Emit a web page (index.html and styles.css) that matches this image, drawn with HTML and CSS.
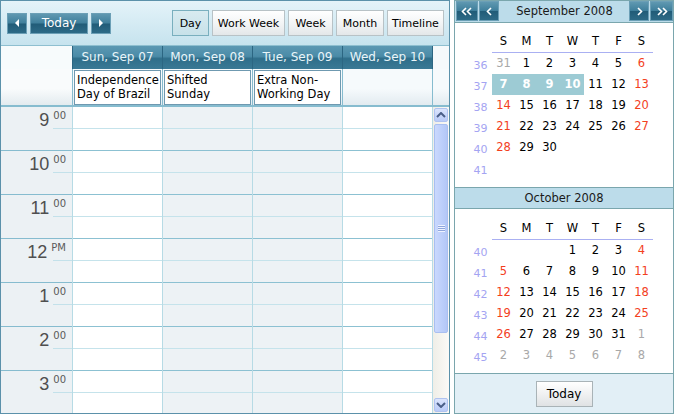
FILE: index.html
```html
<!DOCTYPE html>
<html>
<head>
<meta charset="utf-8">
<title>Scheduler</title>
<link rel="stylesheet" href="styles.css">
</head>
<body>
<div class="app">
  <div class="sched">
    <div class="toolbar">
      <div class="nav">
        <button class="nbtn arrow"><svg width="6" height="8" viewBox="0 0 6 8"><path d="M5 0 L1 4 L5 8 Z" fill="#fff"/></svg></button>
        <button class="nbtn today">Today</button>
        <button class="nbtn arrow"><svg width="6" height="8" viewBox="0 0 6 8"><path d="M1 0 L5 4 L1 8 Z" fill="#fff"/></svg></button>
      </div>
      <div class="views">
        <button class="vbtn sel w-day">Day</button>
        <button class="vbtn w-ww">Work Week</button>
        <button class="vbtn w-week">Week</button>
        <button class="vbtn w-month">Month</button>
        <button class="vbtn w-tl">Timeline</button>
      </div>
    </div>
    <div class="hdr">
      <div class="corner"></div>
      <div class="dh">Sun, Sep 07</div>
      <div class="dh">Mon, Sep 08</div>
      <div class="dh">Tue, Sep 09</div>
      <div class="dh">Wed, Sep 10</div>
      <div class="hscroll"></div>
    </div>
    <div class="allday">
      <div class="acorner"></div>
      <div class="ac"><div class="ev">Independence Day of Brazil</div></div>
      <div class="ac"><div class="ev">Shifted Sunday</div></div>
      <div class="ac"><div class="ev">Extra Non-Working Day</div></div>
      <div class="ac"></div>
      <div class="ascroll"></div>
    </div>
    <div class="body">
      <div class="times">
        <div class="hour"><div class="lbl"><span class="hh">9</span><span class="mm">00</span></div></div>
        <div class="hour"><div class="lbl"><span class="hh">10</span><span class="mm">00</span></div></div>
        <div class="hour"><div class="lbl"><span class="hh">11</span><span class="mm">00</span></div></div>
        <div class="hour"><div class="lbl"><span class="hh">12</span><span class="mm">PM</span></div></div>
        <div class="hour"><div class="lbl"><span class="hh">1</span><span class="mm">00</span></div></div>
        <div class="hour"><div class="lbl"><span class="hh">2</span><span class="mm">00</span></div></div>
        <div class="hour"><div class="lbl"><span class="hh">3</span><span class="mm">00</span></div></div>
      </div>
      <div class="col">
        <div class="s"></div><div class="s"></div><div class="s"></div><div class="s"></div><div class="s"></div><div class="s"></div><div class="s"></div><div class="s"></div><div class="s"></div><div class="s"></div><div class="s"></div><div class="s"></div><div class="s"></div><div class="s"></div>
      </div>
      <div class="col gray">
        <div class="s"></div><div class="s"></div><div class="s"></div><div class="s"></div><div class="s"></div><div class="s"></div><div class="s"></div><div class="s"></div><div class="s"></div><div class="s"></div><div class="s"></div><div class="s"></div><div class="s"></div><div class="s"></div>
      </div>
      <div class="col gray">
        <div class="s"></div><div class="s"></div><div class="s"></div><div class="s"></div><div class="s"></div><div class="s"></div><div class="s"></div><div class="s"></div><div class="s"></div><div class="s"></div><div class="s"></div><div class="s"></div><div class="s"></div><div class="s"></div>
      </div>
      <div class="col">
        <div class="s"></div><div class="s"></div><div class="s"></div><div class="s"></div><div class="s"></div><div class="s"></div><div class="s"></div><div class="s"></div><div class="s"></div><div class="s"></div><div class="s"></div><div class="s"></div><div class="s"></div><div class="s"></div>
      </div>
      <div class="vscroll">
        <div class="sbtn"><svg width="10" height="6" viewBox="0 0 10 6"><path d="M1 5 L5 1 L9 5" fill="none" stroke="#4a5f88" stroke-width="2"/></svg></div>
        <div class="thumb"><div class="grip"></div></div>
        <div class="sfill"></div>
        <div class="sbtn"><svg width="10" height="6" viewBox="0 0 10 6"><path d="M1 1 L5 5 L9 1" fill="none" stroke="#4a5f88" stroke-width="2"/></svg></div>
      </div>
    </div>
  </div>

  <div class="cal">
    <div class="cnav">
      <button class="cbtn wide"><svg width="12" height="9" viewBox="0 0 12 9"><path d="M5 1 L1.5 4.5 L5 8 M10 1 L6.5 4.5 L10 8" fill="none" stroke="#fff" stroke-width="1.6"/></svg></button>
      <button class="cbtn"><svg width="7" height="9" viewBox="0 0 7 9"><path d="M5 1 L1.5 4.5 L5 8" fill="none" stroke="#fff" stroke-width="1.6"/></svg></button>
      <div class="ctitle">September 2008</div>
      <button class="cbtn"><svg width="7" height="9" viewBox="0 0 7 9"><path d="M2 1 L5.5 4.5 L2 8" fill="none" stroke="#fff" stroke-width="1.6"/></svg></button>
      <button class="cbtn wide"><svg width="12" height="9" viewBox="0 0 12 9"><path d="M2 1 L5.5 4.5 L2 8 M7 1 L10.5 4.5 L7 8" fill="none" stroke="#fff" stroke-width="1.6"/></svg></button>
    </div>
    <div class="month m1">
      <div class="mgrid">
        <span></span><span class="dn">S</span><span class="dn">M</span><span class="dn">T</span><span class="dn">W</span><span class="dn">T</span><span class="dn">F</span><span class="dn">S</span>
        <span class="wk">36</span><span class="o">31</span><span>1</span><span>2</span><span>3</span><span>4</span><span>5</span><span class="we">6</span>
        <span class="wk">37</span><span class="sl">7</span><span class="sl">8</span><span class="sl">9</span><span class="sl">10</span><span>11</span><span>12</span><span class="we">13</span>
        <span class="wk">38</span><span class="we">14</span><span>15</span><span>16</span><span>17</span><span>18</span><span>19</span><span class="we">20</span>
        <span class="wk">39</span><span class="we">21</span><span>22</span><span>23</span><span>24</span><span>25</span><span>26</span><span class="we">27</span>
        <span class="wk">40</span><span class="we">28</span><span>29</span><span>30</span><span></span><span></span><span></span><span></span>
        <span class="wk">41</span><span></span><span></span><span></span><span></span><span></span><span></span><span></span>
      </div>
    </div>
    <div class="mhead">October 2008</div>
    <div class="month m2">
      <div class="mgrid">
        <span></span><span class="dn">S</span><span class="dn">M</span><span class="dn">T</span><span class="dn">W</span><span class="dn">T</span><span class="dn">F</span><span class="dn">S</span>
        <span class="wk">40</span><span></span><span></span><span></span><span>1</span><span>2</span><span>3</span><span class="we">4</span>
        <span class="wk">41</span><span class="we">5</span><span>6</span><span>7</span><span>8</span><span>9</span><span>10</span><span class="we">11</span>
        <span class="wk">42</span><span class="we">12</span><span>13</span><span>14</span><span>15</span><span>16</span><span>17</span><span class="we">18</span>
        <span class="wk">43</span><span class="we">19</span><span>20</span><span>21</span><span>22</span><span>23</span><span>24</span><span class="we">25</span>
        <span class="wk">44</span><span class="we">26</span><span>27</span><span>28</span><span>29</span><span>30</span><span>31</span><span class="o">1</span>
        <span class="wk">45</span><span class="o">2</span><span class="o">3</span><span class="o">4</span><span class="o">5</span><span class="o">6</span><span class="o">7</span><span class="o">8</span>
      </div>
    </div>
    <div class="cfoot"><button class="tbtn">Today</button></div>
  </div>
</div>
</body>
</html>
```

FILE: styles.css
```css
* { box-sizing: border-box; }
html, body { margin: 0; padding: 0; background: #fff; }
body { font-family: "DejaVu Sans", Verdana, sans-serif; font-size: 11px; color: #000; }
button { font-family: inherit; font-size: 11px; margin: 0; padding: 0; cursor: default; }

.app { display: flex; width: 674px; height: 414px; gap: 4px; }

/* ---------- scheduler ---------- */
.sched {
  width: 450px; height: 414px;
  border: 1px solid #5b91aa;
  display: flex; flex-direction: column;
  overflow: hidden;
}
.toolbar {
  height: 45px; flex: none;
  display: flex; align-items: center;
  padding-left: 6px;
  background: linear-gradient(#e4f3f9, #c6e3ee);
  border-bottom: 1px solid #8ebfd0;
}
.nav { display: flex; gap: 3px; }
.nbtn {
  height: 21px;
  border: 1px solid #6b9fb6;
  background: linear-gradient(#5f98b1, #3f7f9b 48%, #215c78 52%, #2d6a86);
  color: #fff;
  display: flex; align-items: center; justify-content: center;
}
.nbtn.arrow { width: 20px; }
.nbtn.today { width: 58px; font-size: 12px; }
.views { display: flex; gap: 3px; margin-left: 61px; }
.vbtn {
  height: 26px;
  border: 1px solid #b8c2c6;
  background: linear-gradient(#ffffff, #f3f5f6 50%, #e3e7e9);
  color: #000;
}
.vbtn.sel { background: linear-gradient(#d8ebf0, #c7e1e9); border-color: #79afbe; }
.w-day { width: 37px; }
.w-ww { width: 73px; }
.w-week { width: 45px; }
.w-month { width: 48px; }
.w-tl { width: 57px; }

.hdr { height: 23px; flex: none; display: flex; }
.corner { width: 71px; background: #f7fbfc; }
.dh {
  width: 90px;
  border-left: 1px solid #2c6682;
  background: linear-gradient(#5b98b3, #4b8ba7 45%, #2f6e8a 55%, #3a7995);
  color: #eaf5f9;
  font-size: 12px;
  text-align: center;
  line-height: 23px;
}
.hscroll { width: 17px; border-left: 1px solid #2c6682; background: #f5f9fb; }

.allday {
  height: 38px; flex: none; display: flex;
  border-bottom: 2px solid #86bccf;
}
.acorner { width: 71px; background: linear-gradient(#f9fbfc 55%, #e3ebef); }
.ac {
  width: 90px;
  border-left: 1px solid #86bccf;
  background: linear-gradient(#f6fafc 55%, #e2ebf0);
  padding: 1px 1px 0 1px;
}
.ascroll { width: 17px; border-left: 1px solid #86bccf; background: linear-gradient(#f6fafc 55%, #e2ebf0); }
.ev {
  width: 87px; height: 35px;
  border: 1px solid #6f99b0;
  background: #fff;
  padding: 2px 0 0 2px;
  font-size: 11.5px;
  line-height: 14px;
  color: #000;
  overflow: hidden;
}

.body { flex: 1; display: flex; overflow: hidden; }
.times { width: 71px; background: #ecf1f4; flex: none; }
.hour { height: 44px; border-bottom: 1px solid #86bccf; }
.lbl {
  height: 22px;
  text-align: right;
  padding-right: 6px;
  padding-top: 4px;
  white-space: nowrap;
  background: linear-gradient(#c3e1ea, #c3e1ea) no-repeat right bottom / 19px 1px;
  color: #555;
}
.hh { font-family: "Liberation Sans", Arial, sans-serif; font-size: 18px; line-height: 18px; vertical-align: top; color: #4f4f4f; }
.mm { font-size: 10px; line-height: 10px; vertical-align: top; margin-left: 4px; color: #5a5a5a; }

.col { width: 90px; flex: none; border-left: 1px solid #b7dbe5; background: #fff; }
.col.gray { background: #edf2f5; }
.col:first-of-type { border-left-color: #86bccf; }
.s { height: 22px; border-bottom: 1px solid #c5e3eb; }
.s:nth-child(even) { border-bottom-color: #8cc1d2; }

.vscroll {
  width: 17px; flex: none;
  border-left: 1px solid #b7dbe5;
  background: linear-gradient(to right, #efeee7, #fbfaf7);
  padding: 1px;
  display: flex; flex-direction: column;
}
.sbtn {
  height: 14px; flex: none;
  border: 1px solid #b0c3f0;
  border-radius: 2px;
  background: linear-gradient(#dbe5fd, #b9cbf8);
  display: flex; align-items: center; justify-content: center;
}
.thumb {
  height: 209px; flex: none; margin-top: 2px;
  border: 1px solid #a9bff1;
  border-radius: 2px;
  background: linear-gradient(to right, #cad8fd, #bed0fb 50%, #b3c7f7);
  display: flex; align-items: center; justify-content: center;
}
.grip {
  width: 7px; height: 7px;
  background: repeating-linear-gradient(#eef3ff 0 1px, #8fa6dc 1px 2px);
}
.sfill { flex: 1; }

/* ---------- calendar ---------- */
.cal {
  width: 220px; height: 414px;
  border: 1px solid #7aa6ad;
  display: flex; flex-direction: column;
  font-size: 11.5px;
}
.cnav {
  height: 22px; flex: none;
  display: flex; align-items: stretch;
  padding: 0 0 1px 1px;
  background: #bcdcea;
  border-bottom: 1px solid #7aa6ad;
}
.cbtn {
  width: 20px;
  border: 1px solid #6b9fb6;
  background: linear-gradient(#5f98b1, #3f7f9b 48%, #215c78 52%, #2d6a86);
  display: flex; align-items: center; justify-content: center;
  margin-right: 1px;
}
.cbtn.wide { width: 22px; }
.cbtn:last-child { margin-right: 0; width: 23px; }
.ctitle { flex: 1; text-align: center; line-height: 21px; color: #1a1a1a; font-size: 11.5px; }

.month { height: 164px; flex: none; padding-left: 14px; }
.m1 { padding-top: 8px; }
.m2 { padding-top: 9px; }
.mgrid {
  display: grid;
  grid-template-columns: repeat(8, 23px);
  grid-template-rows: 22px;
  grid-auto-rows: 21px;
  text-align: center;
  line-height: 21px;
}
.mgrid span { display: block; }
.dn { border-bottom: 1px solid #aab0f2; }
.wk { color: #a4a4f2; font-size: 11px; padding-top: 2px; }
.we { color: #f3401d; }
.o { color: #a8a8a8; }
.sl { background: #9dcbd4; color: #fff; font-weight: bold; }

.mhead {
  height: 22px; flex: none;
  border-top: 1px solid #7aa6ad;
  border-bottom: 1px solid #7aa6ad;
  background: #bcdcea;
  text-align: center;
  line-height: 20px;
  font-size: 11.5px;
  color: #1a1a1a;
}
.cfoot {
  flex: 1;
  border-top: 1px solid #7aa6ad;
  background: #e2eff6;
  display: flex; align-items: center; justify-content: center;
  padding-top: 1px;
}
.tbtn {
  width: 57px; height: 26px;
  border: 1px solid #a9b3b7;
  background: linear-gradient(#ffffff, #f0f1f2 50%, #dfe2e4);
  font-size: 12px;
  color: #000;
}
```
